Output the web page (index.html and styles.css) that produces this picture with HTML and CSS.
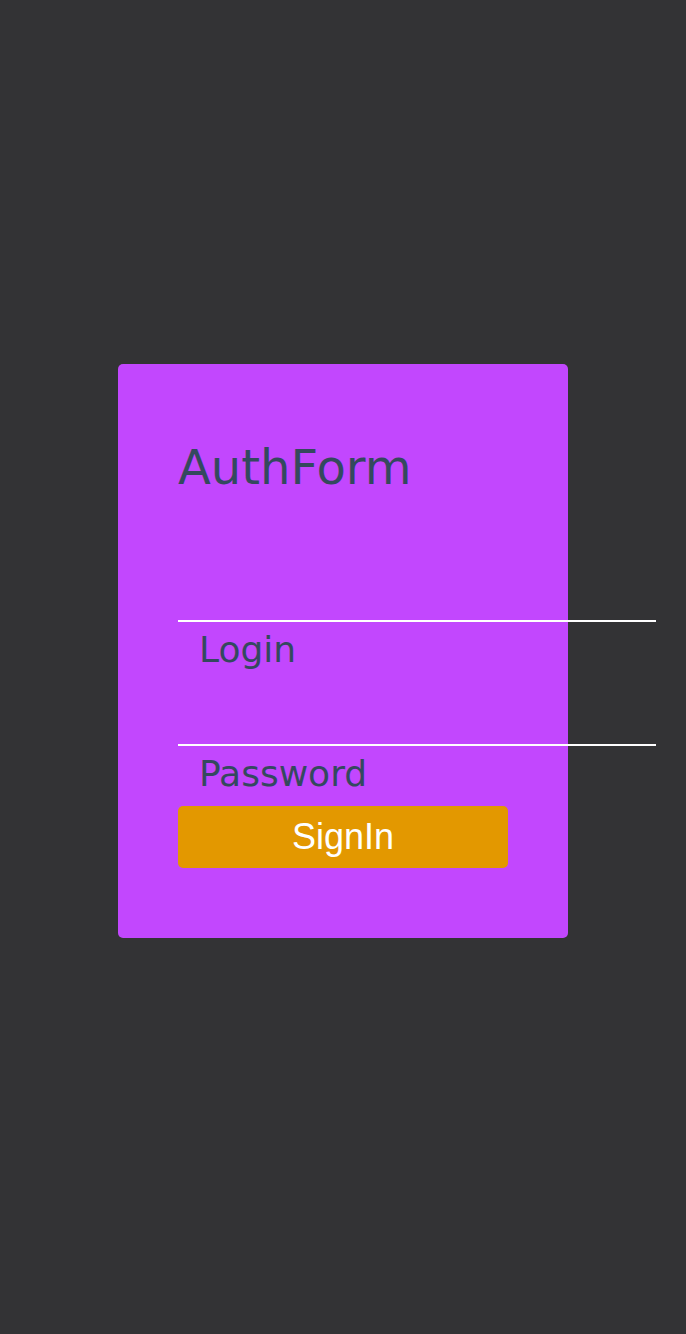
FILE: index.html
```html
<!DOCTYPE html>
<html lang="en">
<head>
<meta charset="utf-8">
<title>AuthForm</title>
<link rel="stylesheet" href="styles.css">
</head>
<body>
<main class="page">
  <form class="card">
    <h1 class="title">AuthForm</h1>
    <div class="field">
      <input class="input" type="text" id="login">
      <label class="label" for="login">Login</label>
    </div>
    <div class="field">
      <input class="input" type="password" id="password">
      <label class="label" for="password">Password</label>
    </div>
    <button class="button" type="button">SignIn</button>
  </form>
</main>
</body>
</html>
```

FILE: styles.css
```css
html, body {
  margin: 0;
  padding: 0;
  background: #333335;
}

.page {
  min-height: 1334px;
  display: flex;
  flex-direction: column;
  align-items: center;
  padding-top: 364px;
  box-sizing: border-box;
}

.card {
  width: 450px;
  box-sizing: border-box;
  padding: 75px 60px 70px;
  background: #c247fe;
  border-radius: 5px;
  display: flex;
  flex-direction: column;
  align-items: flex-start;
}

.title {
  margin: 0 0 63px;
  font-family: "DejaVu Sans", sans-serif;
  font-weight: normal;
  font-size: 48px;
  line-height: 56px;
  color: #34495e;
}

.field {
  display: flex;
  flex-direction: column;
  align-items: flex-start;
}

.input {
  display: block;
  width: 478px;
  height: 64px;
  box-sizing: border-box;
  margin: 0;
  padding: 0;
  border: none;
  border-bottom: 2px solid #ffffff;
  background: transparent;
  outline: none;
}

.label {
  display: block;
  height: 60px;
  box-sizing: border-box;
  padding: 7px 0 0 21px;
  font-family: "DejaVu Sans", sans-serif;
  font-size: 36px;
  line-height: 42px;
  color: #34495e;
}

.button {
  width: 330px;
  height: 62px;
  margin: 0;
  padding: 0;
  border: none;
  border-radius: 5px;
  background: #e39800;
  color: #ffffff;
  font-family: "Liberation Sans", Arial, sans-serif;
  font-size: 36px;
  line-height: 62px;
  text-align: center;
  cursor: pointer;
}
```
